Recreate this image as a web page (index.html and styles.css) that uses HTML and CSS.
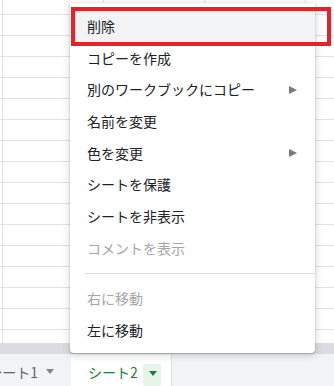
FILE: index.html
```html
<!DOCTYPE html>
<html lang="ja">
<head>
    <meta charset="UTF-8">
    <meta name="viewport" content="width=device-width, initial-scale=1.0">
    <title>シートメニュー</title>
    <link rel="stylesheet" href="styles.css">
</head>
<body>
    <div class="sheet">
        <div class="grid"></div>
        <div class="scrollbar"></div>
        <div class="tabbar">
            <div class="tab">
                <span class="tab-name">シート1</span>
                <svg class="tab-caret" width="8" height="5" viewBox="0 0 8 5"><path d="M0 0h8L4 5z" fill="#80868b"/></svg>
            </div>
            <div class="tab tab-active">
                <span class="tab-name">シート2</span>
                <span class="tab-drop">
                    <svg width="8" height="5" viewBox="0 0 8 5"><path d="M0 0h8L4 5z" fill="#188038"/></svg>
                </span>
            </div>
        </div>
    </div>

    <!-- context menu over the grid -->
    <div class="menu">
        <div class="item item-hover">削除</div>
        <div class="item">コピーを作成</div>
        <div class="item">別のワークブックにコピー
            <svg class="sub" width="8" height="8" viewBox="0 0 8 8"><path d="M0 0l8 4-8 4z" fill="#7a7a7a"/></svg>
        </div>
        <div class="item">名前を変更</div>
        <div class="item">色を変更
            <svg class="sub" width="8" height="8" viewBox="0 0 8 8"><path d="M0 0l8 4-8 4z" fill="#7a7a7a"/></svg>
        </div>
        <div class="item">シートを保護</div>
        <div class="item">シートを非表示</div>
        <div class="item item-disabled">コメントを表示</div>
        <div class="separator"></div>
        <div class="item item-disabled">右に移動</div>
        <div class="item">左に移動</div>
    </div>

    <div class="callout"></div>
</body>
</html>
```

FILE: styles.css
```css
body {
    margin: 0;
    width: 334px;
    height: 386px;
    overflow: hidden;
    font-family: "Noto Sans CJK JP", Roboto, sans-serif;
    font-size: 14px;
    color: #202124;
}
.sheet {
    display: flex;
    flex-direction: column;
    height: 386px;
}
.grid {
    height: 343px;
    background-color: #fff;
    background-image:
        linear-gradient(to right, #e1e1e1 0 1px, transparent 1px),
        linear-gradient(to bottom, #e1e1e1 0 1px, transparent 1px);
    background-size: 101px 100%, 100% 21px;
    background-position: 2px 0, 0 14px;
}
.scrollbar {
    height: 11px;
    background: #dadce0;
}
.tabbar {
    display: flex;
    height: 32px;
    background: #f1f3f4;
}
.tab {
    display: flex;
    align-items: center;
    gap: 8px;
    width: 101px;
    height: 32px;
    box-sizing: border-box;
    color: #5f6368;
}
.tab:first-child {
    margin-left: -30px;
    justify-content: flex-end;
    padding-right: 17px;
}
.tab-name {
    line-height: 20px;
    padding-top: 4px;
}
.tab-caret {
    margin-top: 2px;
}
.tab-active {
    background: #fff;
    color: #188038;
    padding-left: 17px;
    gap: 5px;
    border-right: 1px solid #dadce0;
}
.tab-drop {
    display: flex;
    align-items: center;
    justify-content: center;
    width: 18px;
    height: 22px;
    margin-top: 9px;
    background: #e6f4ea;
    border-radius: 2px;
}
.tab-drop svg {
    margin-left: 3px;
    margin-bottom: 2px;
}
.menu {
    position: absolute;
    left: 70px;
    top: 3px;
    width: 245px;
    height: 350px;
    box-sizing: border-box;
    padding-top: 7px;
    background: #fff;
    border-radius: 0 0 4px 4px;
    box-shadow: 0 2px 6px 2px rgba(60, 64, 67, 0.15), 0 1px 2px rgba(60, 64, 67, 0.3);
}
.item {
    display: flex;
    align-items: center;
    justify-content: space-between;
    height: 31.7px;
    padding: 0 18px 0 17px;
    white-space: nowrap;
}
.item-hover {
    background: #f1f3f4;
}
.item-disabled {
    color: #a6a6a6;
}
.sub {
    margin-top: 1px;
}
.separator {
    height: 1px;
    margin: 9px 0 9px 15px;
    background: #dadce0;
}
.callout {
    position: absolute;
    left: 71px;
    top: 7px;
    width: 260px;
    height: 39px;
    box-sizing: border-box;
    border: 4px solid #e62129;
}
```
